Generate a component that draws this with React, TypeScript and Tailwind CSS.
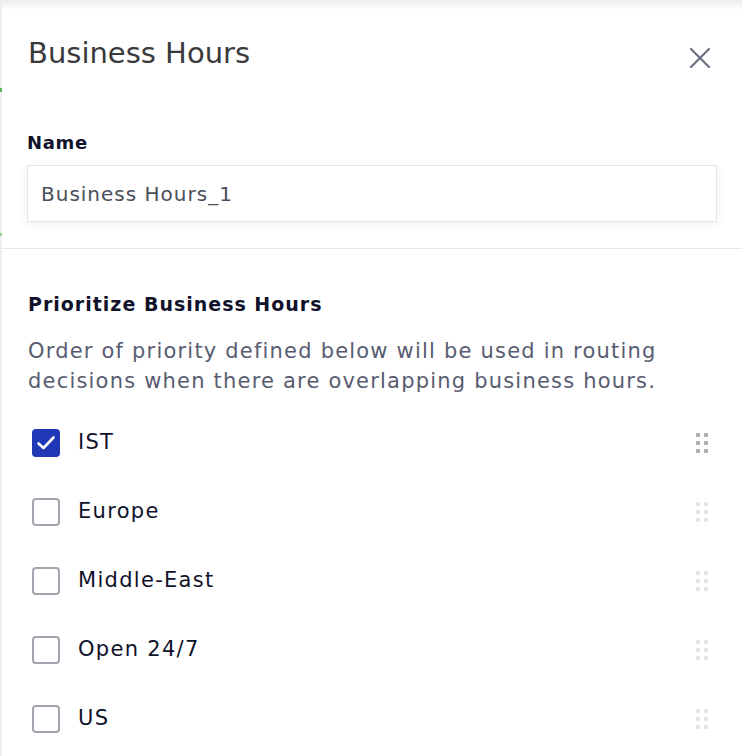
import React from "react";

const items = [
  { label: "IST", checked: true },
  { label: "Europe", checked: false },
  { label: "Middle-East", checked: false },
  { label: "Open 24/7", checked: false },
  { label: "US", checked: false },
];

function DragHandle({ dark }: { dark: boolean }) {
  const c = dark ? "bg-[#a9acb4]" : "bg-[#e3e4e8]";
  return (
    <div className="grid grid-cols-2 gap-x-[4px] gap-y-[4px]">
      {Array.from({ length: 6 }).map((_, i) => (
        <span key={i} className={`block h-[4px] w-[4px] rounded-[1px] ${c}`} />
      ))}
    </div>
  );
}

export default function App() {
  return (
    <div
      className="relative flex h-[756px] w-[742px] overflow-hidden bg-white"
      style={{ fontFamily: '"DejaVu Sans", "Open Sans", sans-serif' }}
    >
      <div className="w-[2px] shrink-0 bg-[#eceef3]" />
      <span className="absolute left-0 top-[88px] h-[4px] w-[2px] bg-[#5cb85c]" />
      <span className="absolute left-0 top-[233px] h-[3px] w-[2px] bg-[#8fd18f]" />
      <div className="pointer-events-none absolute left-0 right-0 top-0 h-[10px] bg-gradient-to-b from-[#ececee] to-transparent" />
      <div className="flex flex-1 flex-col">
        <div className="flex items-center justify-between pl-[26px] pr-[30px] pt-[35px]">
          <h1 className="text-[29px] leading-[36px] text-[#3a3a3c]">Business Hours</h1>
          <svg width="24" height="24" viewBox="0 0 24 24" className="mt-[9px] text-[#6b7080]">
            <path d="M3 3 L21 21 M21 3 L3 21" stroke="currentColor" strokeWidth="2.2" strokeLinecap="round" />
          </svg>
        </div>
        <div className="px-[25px] pt-[60px] pb-[26px]">
          <div className="text-[18px] font-bold leading-[24px] tracking-[0.7px] text-[#10122b]">Name</div>
          <div className="mt-[10px] flex h-[57px] items-center border border-[#e4e5e9] px-[13px] text-[20px] tracking-[1px] text-[#4a4e59] shadow-[0_2px_10px_rgba(0,0,0,0.06)]">
            Business Hours_1
          </div>
        </div>
        <div className="h-px bg-[#e5e6ea]" />
        <div className="px-[26px] pt-[42px]">
          <div className="text-[19px] font-bold leading-[26px] tracking-[1px] text-[#10122b]">Prioritize Business Hours</div>
          <p className="mt-[19px] text-[21px] leading-[30px] tracking-[1.2px] text-[#585c70]">
            Order of priority defined below will be used in routing
            <br />
            decisions when there are overlapping business hours.
          </p>
          <div className="mt-[12px] flex flex-col">
            {items.map((it, i) => (
              <div key={it.label} className="flex h-[69px] items-center pl-[4px] pr-[8px]">
                {it.checked ? (
                  <span className="flex h-[28px] w-[28px] items-center justify-center rounded-[4px] bg-[#2138b6]">
                    <svg width="24" height="24" viewBox="0 0 24 24">
                      <path d="M4.5 12.5 L9.5 17 L19.5 6.5" stroke="white" strokeWidth="2.6" fill="none" strokeLinecap="round" strokeLinejoin="round" />
                    </svg>
                  </span>
                ) : (
                  <span className="block h-[28px] w-[28px] rounded-[4px] border-2 border-[#a3a5ae] bg-white" />
                )}
                <span className="ml-[18px] flex-1 text-[21px] tracking-[1.3px] text-[#10122b]">{it.label}</span>
                <DragHandle dark={i === 0} />
              </div>
            ))}
          </div>
        </div>
      </div>
    </div>
  );
}
